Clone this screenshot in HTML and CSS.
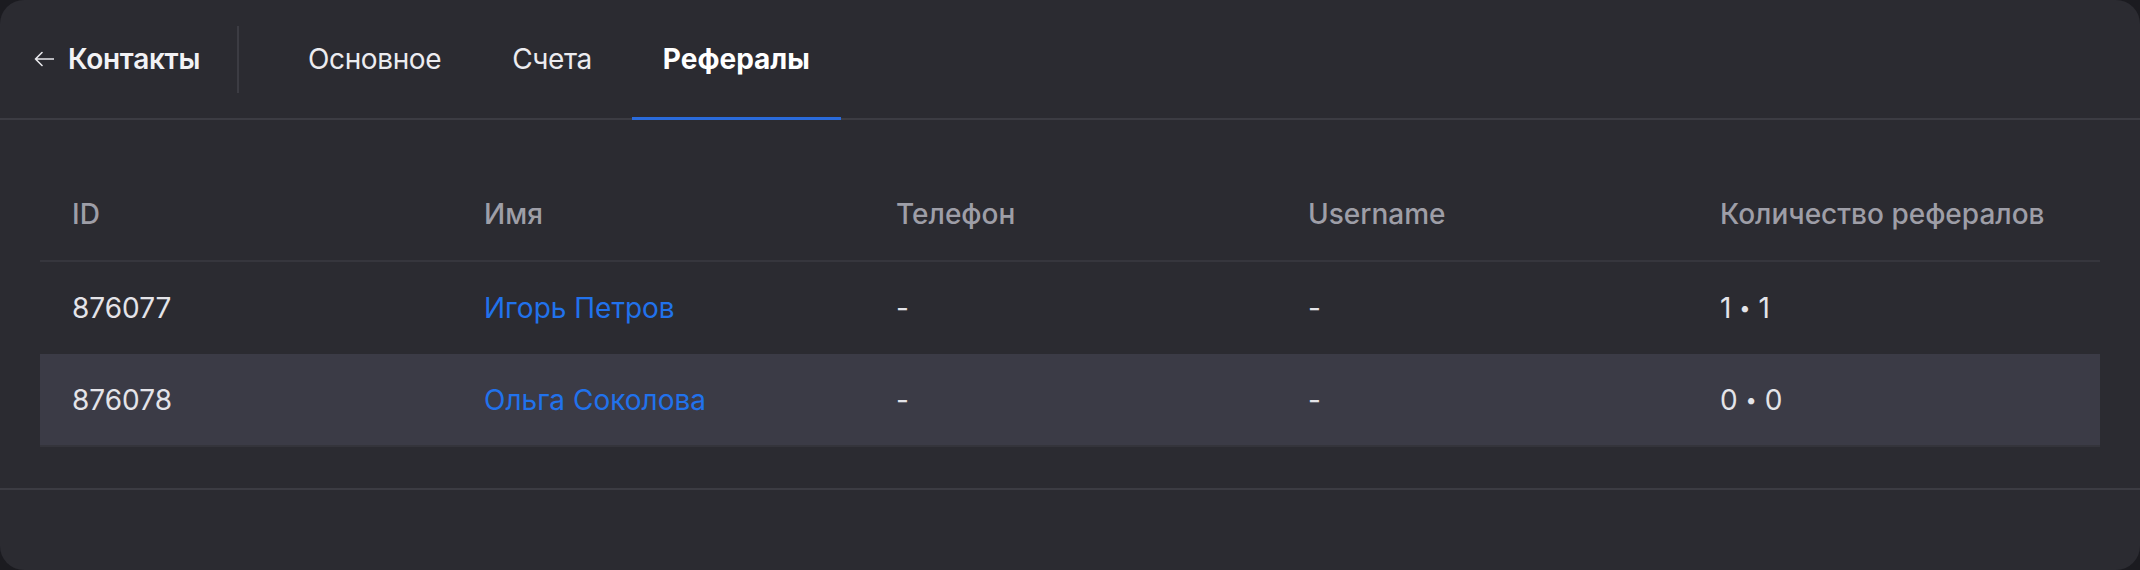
FILE: index.html
```html
<!DOCTYPE html>
<html lang="ru">
<head>
	<meta charset="UTF-8" />
	<title>Рефералы</title>
	<link rel="stylesheet" href="styles.css">
</head>
<body>
	<div class="card">
		<nav class="topbar">
			<a class="back" href="#contacts">
				<svg class="back-icon" width="20" height="16" viewBox="0 0 20 16" fill="none">
					<path d="M19.5 8H1.5M8 1.5L1.5 8L8 14.5" stroke="currentColor" stroke-width="1.6" stroke-linecap="round" stroke-linejoin="round"/>
				</svg>
				<span>Контакты</span>
			</a>
			<div class="divider"></div>
			<div class="tabs">
				<a class="tab" href="#main">Основное</a>
				<a class="tab" href="#accounts">Счета</a>
				<a class="tab active" href="#referrals">Рефералы</a>
			</div>
		</nav>

		<section class="content">
			<table class="refs">
				<thead>
					<tr>
						<th>ID</th>
						<th>Имя</th>
						<th>Телефон</th>
						<th>Username</th>
						<th>Количество рефералов</th>
					</tr>
				</thead>
				<tbody>
					<tr>
						<td>876077</td>
						<td><a class="name" href="#876077">Игорь Петров</a></td>
						<td>-</td>
						<td>-</td>
						<td>1 <span class="dot">•</span> 1</td>
					</tr>
					<tr class="hover">
						<td>876078</td>
						<td><a class="name" href="#876078">Ольга Соколова</a></td>
						<td>-</td>
						<td>-</td>
						<td>0 <span class="dot">•</span> 0</td>
					</tr>
				</tbody>
			</table>
		</section>
	</div>
</body>
</html>
```

FILE: styles.css
```css
body {
	margin: 0;
	padding: 0;
	background: #1b1b20;
	font-family: Inter, "Noto Sans", sans-serif;
	-webkit-font-smoothing: antialiased;
}
.card {
	height: 570px;
	background: #2b2b31;
	border-radius: 24px;
	overflow: hidden;
}

/* Top navigation */
.topbar {
	display: flex;
	align-items: stretch;
	height: 118px;
	border-bottom: 2px solid #3c3c43;
}
.back {
	display: flex;
	align-items: center;
	gap: 14px;
	padding-left: 34px;
	color: #f2f2f5;
	text-decoration: none;
	font-size: 28px;
	font-weight: 600;
	letter-spacing: -0.3px;
}
.back-icon {
	color: #e8e8ec;
}
.divider {
	align-self: center;
	width: 2px;
	height: 67px;
	margin-left: 37px;
	background: #3c3c43;
}
.tabs {
	display: flex;
	gap: 9px;
	margin-left: 38px;
}
.tab {
	display: flex;
	align-items: center;
	padding: 0 31px;
	color: #ececf0;
	text-decoration: none;
	font-size: 28px;
	font-weight: 400;
	letter-spacing: -0.4px;
	border-bottom: 3px solid transparent;
	margin-bottom: -2px;
}
.tab.active {
	font-weight: 700;
	letter-spacing: 0;
	color: #ffffff;
	border-bottom-color: #2a6bdb;
}

/* Table */
.content {
	padding: 48px 40px 41px;
	border-bottom: 2px solid #3c3c43;
}
.refs {
	width: 100%;
	border-collapse: collapse;
	table-layout: fixed;
}
.refs th,
.refs td {
	height: 92px;
	padding: 0 32px;
	text-align: left;
	font-size: 28px;
}
.refs th {
	color: #9e9ea7;
	font-weight: 500;
	border-bottom: 2px solid #36363d;
}
.refs td {
	color: #e4e4e9;
	font-weight: 400;
}
.refs tr.hover td {
	background: #3b3b46;
	height: 91px;
	border-bottom: 2px solid #34343b;
}
.name {
	color: #2172ec;
	text-decoration: none;
}
.dot {
	font-size: 20px;
	vertical-align: 3px;
}
```
